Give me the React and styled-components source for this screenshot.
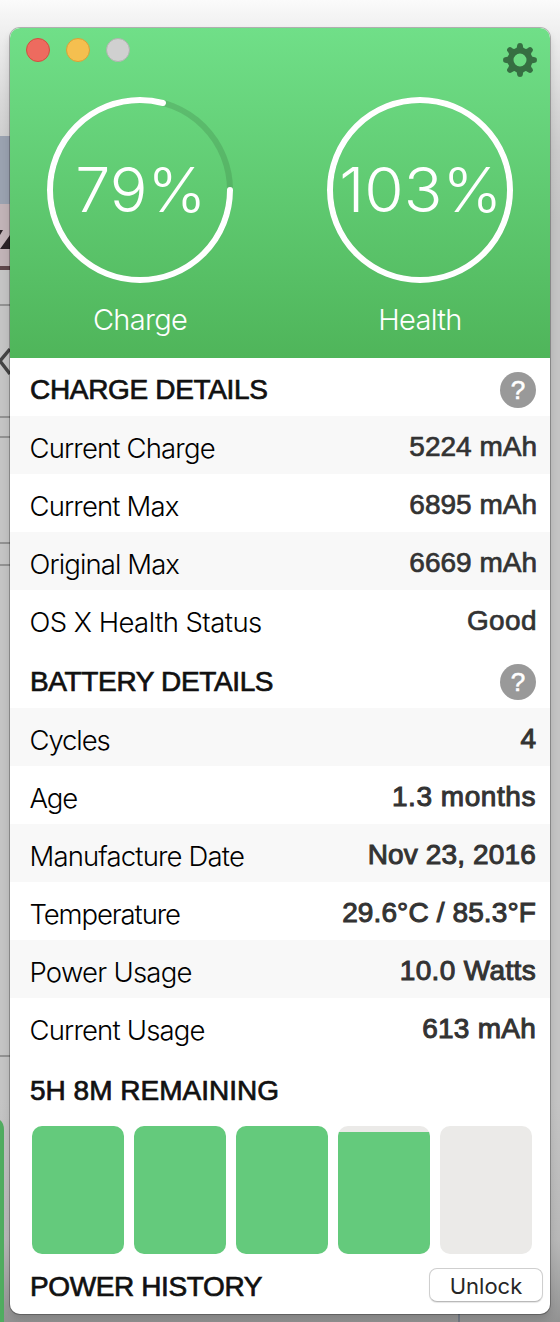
import React from 'react';
import styled, { createGlobalStyle } from 'styled-components';

const GlobalStyle = createGlobalStyle`
  * {
    box-sizing: border-box;
  }
  body {
    margin: 0;
    font-family: "Liberation Sans", Arial, sans-serif;
    background: #c4c4c4;
  }
`;

const Desktop = styled.div`
  position: relative;
  width: 560px;
  height: 1322px;
  padding: 28px 10px 8px;
  overflow: hidden;
  background: linear-gradient(180deg, #fbfbfb 0, #f5f5f5 14px, #ececec 40px, #d8d8d8 100px, #cbcbcb 150px, #c4c4c4 220px, #c4c4c4 1100px, #b8b8b8 1240px, #969696 1314px, #929292 1322px);
`;

const Backdrop = styled.svg`
  position: absolute;
  left: 0;
  top: 0;
`;

const Window = styled.main`
  position: relative;
  display: flex;
  flex-direction: column;
  height: 1286px;
  border-radius: 10px;
  background: #fff;
  overflow: hidden;
`;

const Edge = styled.div`
  position: absolute;
  left: 10px;
  top: 28px;
  width: 540px;
  height: 1286px;
  border-radius: 10px;
  box-shadow: 0 0 0 1px rgba(0,0,0,0.26), 0 5px 8px rgba(0,0,0,0.14);
`;

const Header = styled.header`
  height: 330px;
  flex: none;
  background: linear-gradient(180deg, #70df88 0%, #4fb55a 100%);
`;

const TitleBar = styled.div`
  height: 69px;
  padding: 10px 13px 0 16px;
  display: flex;
  justify-content: space-between;
  align-items: flex-start;
`;

const Lights = styled.div`
  display: flex;
  gap: 16px;
`;

const Light = styled.span`
  width: 24px;
  height: 24px;
  border-radius: 50%;
  border: 1px solid ${({ $edge }) => $edge};
  background: ${({ $color }) => $color};
`;

const Gear = styled.svg`
  display: block;
  margin-top: 5px;
`;

const Gauges = styled.div`
  display: grid;
  grid-template-columns: 260px 260px;
  column-gap: 20px;
`;

const GaugeBox = styled.div`
  display: flex;
  flex-direction: column;
  align-items: center;
`;

const Ring = styled.svg`
  display: block;
`;

const Percent = styled.text`
  font-family: Inter, "Liberation Sans", sans-serif;
  font-size: 62px;
  font-weight: 300;
  fill: #fff;
`;

const GaugeName = styled.div`
  margin-top: 19px;
  font-family: Inter, "Liberation Sans", sans-serif;
  font-size: 29px;
  font-weight: 300;
  line-height: 36px;
  letter-spacing: -0.7px;
  color: #fff;
`;

const SectionHead = styled.div`
  height: ${({ $height }) => $height || 58}px;
  flex: none;
  padding: 0 14px 0 20px;
  display: flex;
  align-items: flex-end;
  justify-content: space-between;
`;

const Title = styled.h2`
  margin: 0;
  font-size: 28px;
  font-weight: 400;
  line-height: 52px;
  letter-spacing: ${({ $track }) => $track || 0}px;
  -webkit-text-stroke: 0.7px #111;
  color: #111;
  white-space: nowrap;
`;

const Help = styled.span`
  width: 36px;
  height: 36px;
  margin-bottom: 8px;
  border-radius: 50%;
  background: #999;
  color: #fff;
  font-size: 26px;
  line-height: 36px;
  text-align: center;
  -webkit-text-stroke: 0.6px #fff;
`;

const Row = styled.div`
  height: 58px;
  flex: none;
  padding: 0 ${({ $right }) => $right}px 0 19.5px;
  display: flex;
  justify-content: space-between;
  background: ${({ $shaded }) => ($shaded ? '#f8f8f8' : '#fff')};
  white-space: nowrap;
`;

const Label = styled.span`
  font-family: Inter, "Liberation Sans", sans-serif;
  font-size: 27.5px;
  font-weight: 300;
  line-height: 64px;
  letter-spacing: ${({ $track }) => $track || 0}px;
  color: #000;
`;

const Value = styled.span`
  font-size: 28px;
  line-height: 61px;
  letter-spacing: ${({ $track }) => $track || 0}px;
  -webkit-text-stroke: ${({ $heavy }) => ($heavy ? 1 : 0.7)}px #333;
  color: #333;
`;

const Cells = styled.div`
  display: flex;
  gap: 10px;
  padding: 9px 0 0 22px;
`;

const Cell = styled.div`
  width: 92px;
  height: 128px;
  border-radius: 10px;
  overflow: hidden;
  background: #ebeae8;
  display: flex;
  align-items: flex-end;
`;

const CellFill = styled.div`
  width: 100%;
  background: #64ca7c;
`;

const Footer = styled.div`
  height: 60px;
  padding: 7px 7px 0 20px;
  display: flex;
  align-items: flex-start;
  justify-content: space-between;
`;

const UnlockButton = styled.button`
  width: 114px;
  height: 34px;
  margin-top: 7px;
  padding: 2px 0 0;
  border: 1px solid #cfcfcf;
  border-bottom-color: #b9b9b9;
  border-radius: 8px;
  background: #fff;
  box-shadow: 0 1px 1px rgba(0,0,0,0.1);
  font-family: Inter, sans-serif;
  font-size: 22px;
  letter-spacing: 0;
  color: #262626;
`;

const chargeRows = [
  { label: 'Current Charge', value: '5224 mAh', labelTrack: -0.85 },
  { label: 'Current Max', value: '6895 mAh', labelTrack: -0.85 },
  { label: 'Original Max', value: '6669 mAh', labelTrack: -0.9 },
  { label: 'OS X Health Status', value: 'Good', labelTrack: -0.55, valueTrack: 0.4 },
];

const batteryRows = [
  { label: 'Cycles', value: '4', labelTrack: -1.1 },
  { label: 'Age', value: '1.3 months', labelTrack: -1.1, valueTrack: 0.55 },
  { label: 'Manufacture Date', value: 'Nov 23, 2016', labelTrack: -0.85, valueTrack: 0.15 },
  { label: 'Temperature', value: '29.6°C / 85.3°F', labelTrack: -1.1, valueTrack: 0.12 },
  { label: 'Power Usage', value: '10.0 Watts', labelTrack: -0.75, valueTrack: 0.35 },
  { label: 'Current Usage', value: '613 mAh', labelTrack: -0.83, valueTrack: 0.25 },
];

const hours = [100, 100, 100, 95.3, 0];

const Gauge = ({ percent, name, textWidth }) => {
  const len = 2 * Math.PI * 90;
  const shown = Math.min(percent, 100) / 100;
  return (
    <GaugeBox>
      <Ring width="186" height="186" viewBox="0 0 186 186">
        <circle cx="93" cy="93" r="90" fill="none" stroke="#2b5a30" strokeOpacity="0.2" strokeWidth="6" />
        <circle
          cx="93"
          cy="93"
          r="90"
          fill="none"
          stroke="#fff"
          strokeWidth="6"
          strokeLinecap="round"
          strokeDasharray={`${len * shown} ${len}`}
        />
        <Percent x="93.7" y="115" textAnchor="middle" textLength={textWidth} lengthAdjust="spacingAndGlyphs">
          {percent}%
        </Percent>
      </Ring>
      <GaugeName>{name}</GaugeName>
    </GaugeBox>
  );
};

const teeth = [0, 45, 90, 135, 180, 225, 270, 315];

const App = () => {
  return (
    <>
      <GlobalStyle />
      <Desktop>
        <Backdrop width="560" height="1322" viewBox="0 0 560 1322">
          <rect x="0" y="136" width="10" height="68" fill="#9aa2b0" />
          <rect x="0" y="204" width="10" height="66" fill="#c1b3b7" />
          <path d="M0 230l3 0-3 5zM0 249l10-14v14z" fill="#2a2226" />
          <rect x="0" y="266" width="10" height="4" fill="#5f474b" />
          <path d="M0 305h10M0 417h10M0 437h10M0 543h10M0 565h10M0 1056h10" stroke="#929292" strokeWidth="2" />
          <path d="M10 349L0 361l10 13" fill="none" stroke="#444" strokeWidth="3.5" />
          <path d="M0 1120q4 3 4 10V1322H0z" fill="#50ac60" />
          <path d="M459 1314v8" stroke="#737a85" strokeWidth="2" />
        </Backdrop>
        <Edge />
        <Window>
          <Header>
            <TitleBar>
              <Lights>
                <Light $color="#ed6b5f" $edge="#d0503f" />
                <Light $color="#f5bf4f" $edge="#d8a038" />
                <Light $color="#d0d0d0" $edge="#aeb4ae" />
              </Lights>
              <Gear width="34" height="34" viewBox="-17 -17 34 34">
                <circle r="9.5" fill="none" stroke="#366f42" strokeWidth="6" />
                {teeth.map((a) => (
                  <path
                    key={a}
                    transform={`rotate(${a})`}
                    d="M-5-10.5C-3.2-12-2.9-13-2.8-15Q-2.5-17 0-17T2.8-15C2.9-13 3.2-12 5-10.5z"
                    fill="#366f42"
                  />
                ))}
              </Gear>
            </TitleBar>
            <Gauges>
              <Gauge percent={79} name="Charge" textWidth="131" />
              <Gauge percent={103} name="Health" textWidth="163" />
            </Gauges>
          </Header>

          <SectionHead>
            <Title $track={-0.33}>CHARGE DETAILS</Title>
            <Help>?</Help>
          </SectionHead>
          {chargeRows.map((row, i) => (
            <Row key={row.label} $shaded={i % 2 === 0} $right={13}>
              <Label $track={row.labelTrack}>{row.label}</Label>
              <Value $track={row.valueTrack}>{row.value}</Value>
            </Row>
          ))}

          <SectionHead $height={60}>
            <Title $track={-0.35}>BATTERY DETAILS</Title>
            <Help>?</Help>
          </SectionHead>
          {batteryRows.map((row, i) => (
            <Row key={row.label} $shaded={i % 2 === 0} $right={14}>
              <Label $track={row.labelTrack}>{row.label}</Label>
              <Value $heavy $track={row.valueTrack}>{row.value}</Value>
            </Row>
          ))}

          <SectionHead $height={61}>
            <Title>5H 8M REMAINING</Title>
          </SectionHead>
          <Cells>
            {hours.map((level, i) => (
              <Cell key={i}>
                <CellFill style={{ height: `${level}%` }} />
              </Cell>
            ))}
          </Cells>
          <Footer>
            <Title $track={-0.38}>POWER HISTORY</Title>
            <UnlockButton>Unlock</UnlockButton>
          </Footer>
        </Window>
      </Desktop>
    </>
  );
};

export default App;
